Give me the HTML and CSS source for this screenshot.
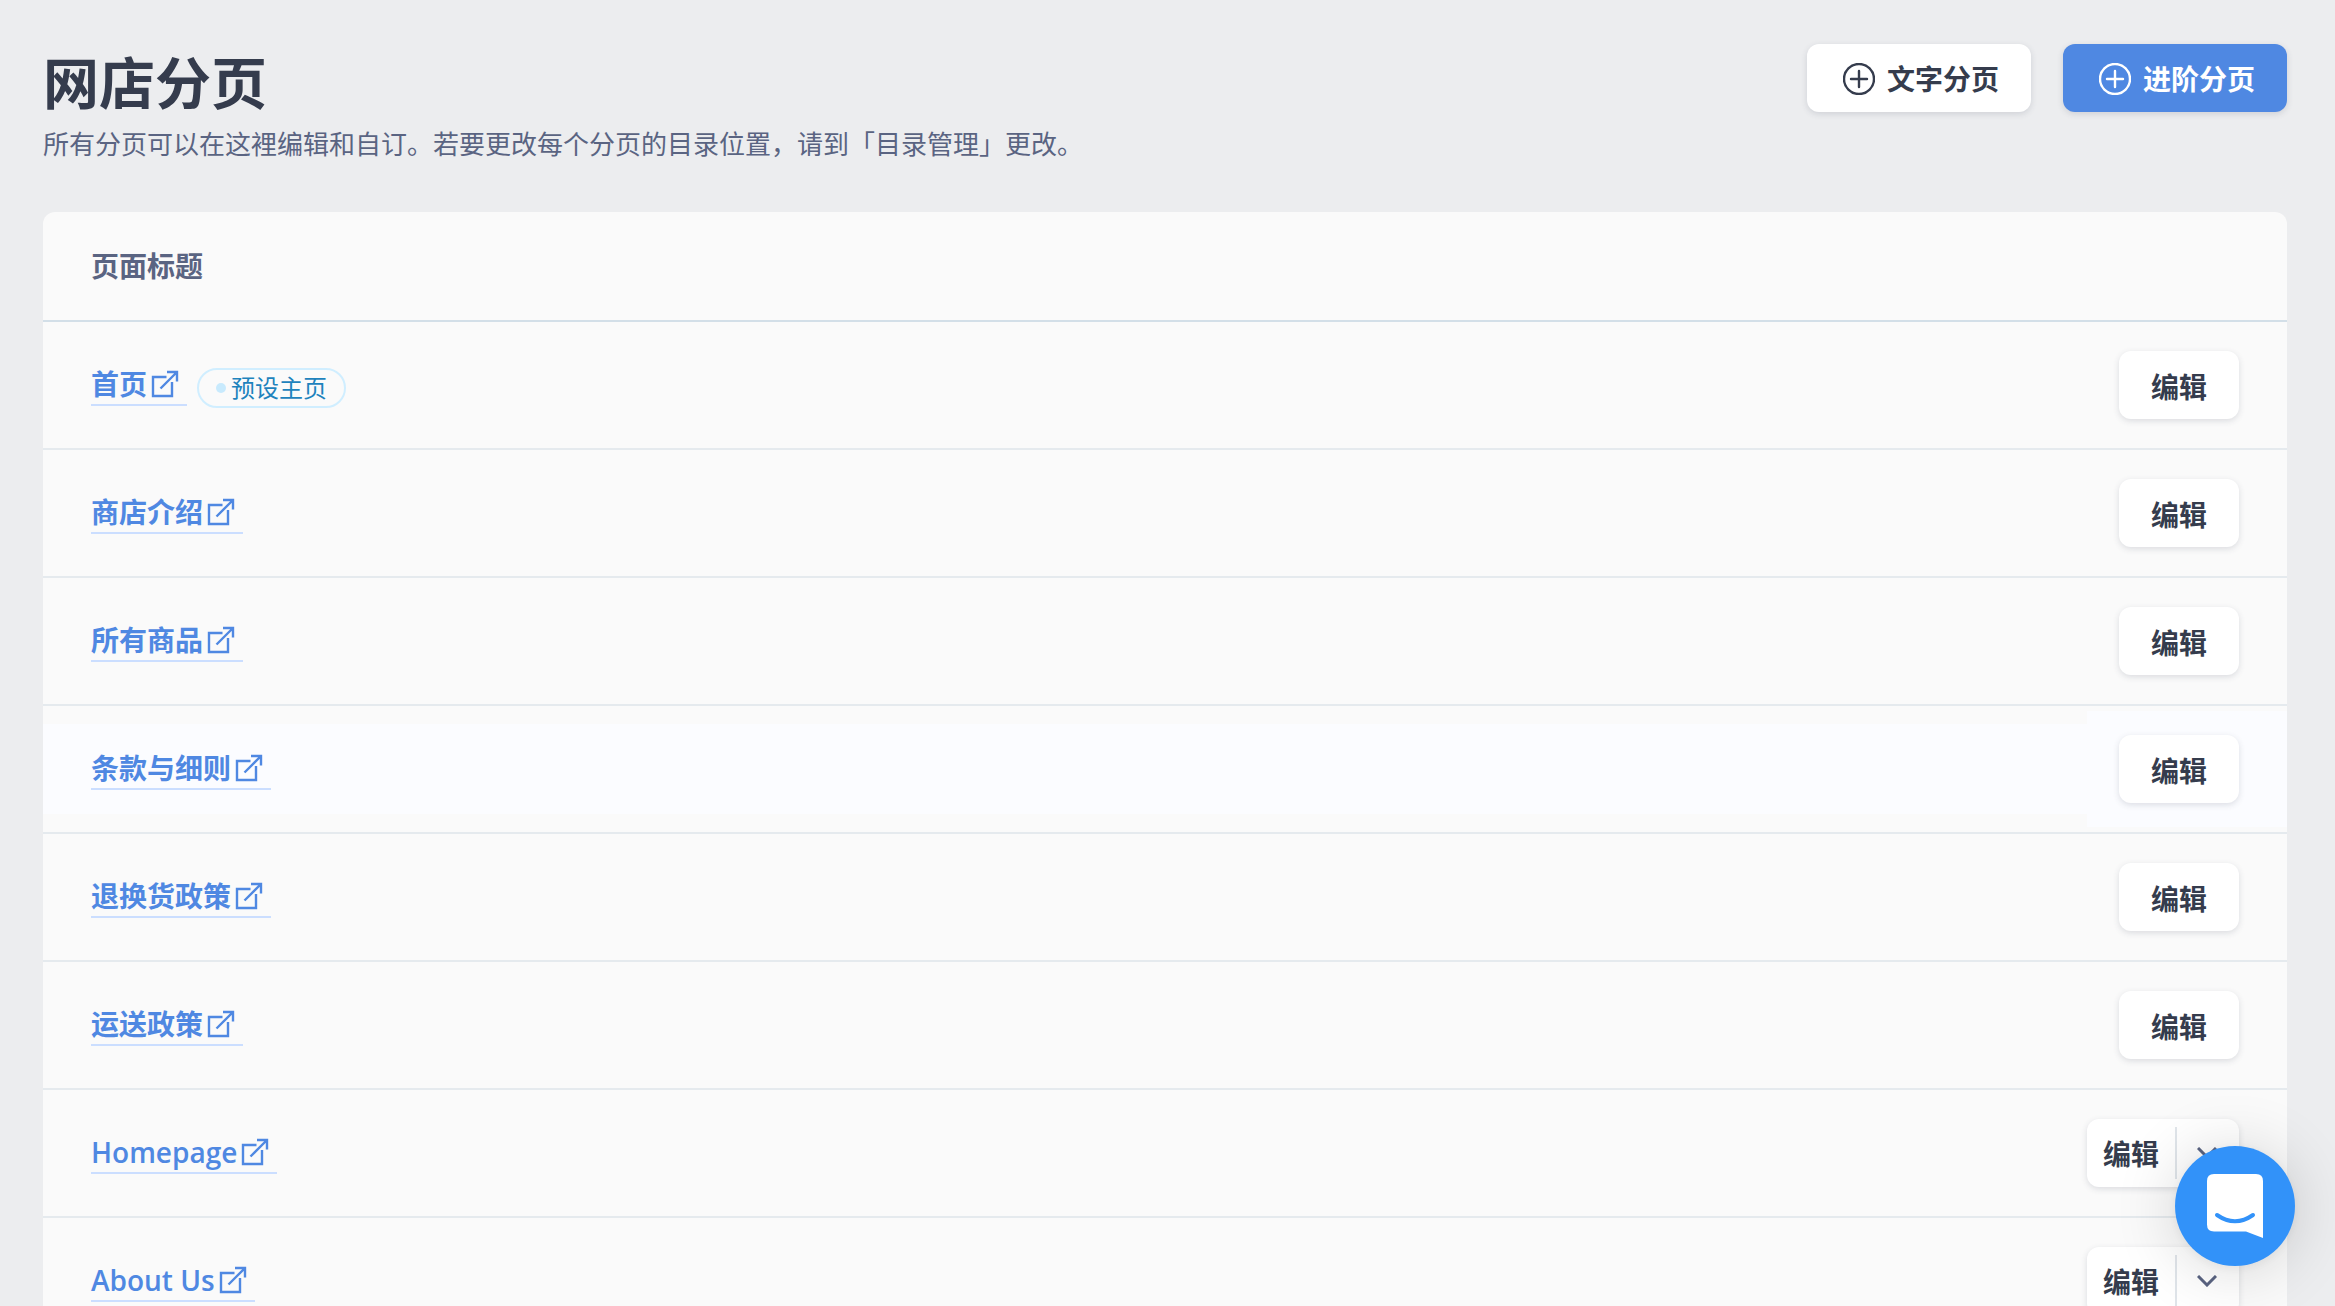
FILE: index.html
```
<!DOCTYPE html>
<html lang="zh-CN">
<head>
    <meta charset="UTF-8">
    <meta name="viewport" content="width=device-width, initial-scale=1.0">
    <title>网店分页</title>
    <link rel="stylesheet" href="styles.css">
</head>
<body>
    <!-- Shared icons -->
    <svg class="icon-defs" aria-hidden="true">
        <symbol id="icon-external" viewBox="0 0 28 28">
            <path d="M15.500 7H2V26H21V12M16 2H26V11.500M26 2L9.500 18.500" fill="none" stroke="currentColor" stroke-width="2.400"/>
        </symbol>
        <symbol id="icon-plus" viewBox="0 0 32 32">
            <circle cx="16" cy="16" r="15" fill="none" stroke="currentColor" stroke-width="2.400"/>
            <path d="M16 8V24M8 16H24" fill="none" stroke="currentColor" stroke-width="2.400" stroke-linecap="round"/>
        </symbol>
        <symbol id="icon-chevron" viewBox="0 0 20 12">
            <path d="M1 1L10 10L19 1" fill="none" stroke="currentColor" stroke-width="3"/>
        </symbol>
    </svg>

    <main class="page">
        <header class="page-header">
            <div class="page-intro">
                <h1>网店分页</h1>
                <p>所有分页可以在这裡编辑和自订。若要更改每个分页的目录位置，请到「目录管理」更改。</p>
            </div>
            <div class="page-actions">
                <button type="button" class="btn btn-add"><svg class="icon-plus" aria-hidden="true"><use href="#icon-plus"/></svg>文字分页</button>
                <button type="button" class="btn btn-add btn-primary"><svg class="icon-plus" aria-hidden="true"><use href="#icon-plus"/></svg>进阶分页</button>
            </div>
        </header>

        <table class="pages-table">
            <thead>
                <tr>
                    <th colspan="2" scope="col">页面标题</th>
                </tr>
            </thead>
            <tbody>
                <tr>
                    <td>
                        <div class="cell-title">
                            <a href="#" class="page-link">首页<svg class="icon-external" aria-hidden="true"><use href="#icon-external"/></svg></a>
                            <span class="badge">预设主页</span>
                        </div>
                    </td>
                    <td class="col-action"><div class="cell-action"><button type="button" class="btn btn-edit">编辑</button></div></td>
                </tr>
                <tr>
                    <td><div class="cell-title"><a href="#" class="page-link">商店介绍<svg class="icon-external" aria-hidden="true"><use href="#icon-external"/></svg></a></div></td>
                    <td class="col-action"><div class="cell-action"><button type="button" class="btn btn-edit">编辑</button></div></td>
                </tr>
                <tr>
                    <td><div class="cell-title"><a href="#" class="page-link">所有商品<svg class="icon-external" aria-hidden="true"><use href="#icon-external"/></svg></a></div></td>
                    <td class="col-action"><div class="cell-action"><button type="button" class="btn btn-edit">编辑</button></div></td>
                </tr>
                <tr class="active">
                    <td><div class="cell-title"><a href="#" class="page-link">条款与细则<svg class="icon-external" aria-hidden="true"><use href="#icon-external"/></svg></a></div></td>
                    <td class="col-action"><div class="cell-action"><button type="button" class="btn btn-edit">编辑</button></div></td>
                </tr>
                <tr>
                    <td><div class="cell-title"><a href="#" class="page-link">退换货政策<svg class="icon-external" aria-hidden="true"><use href="#icon-external"/></svg></a></div></td>
                    <td class="col-action"><div class="cell-action"><button type="button" class="btn btn-edit">编辑</button></div></td>
                </tr>
                <tr>
                    <td><div class="cell-title"><a href="#" class="page-link">运送政策<svg class="icon-external" aria-hidden="true"><use href="#icon-external"/></svg></a></div></td>
                    <td class="col-action"><div class="cell-action"><button type="button" class="btn btn-edit">编辑</button></div></td>
                </tr>
                <tr>
                    <td><div class="cell-title"><a href="#" class="page-link">Homepage<svg class="icon-external" aria-hidden="true"><use href="#icon-external"/></svg></a></div></td>
                    <td class="col-action">
                        <div class="cell-action">
                            <div class="btn-split">
                                <button type="button" class="split-main">编辑</button>
                                <button type="button" class="split-toggle" aria-label="更多"><svg class="icon-chevron" aria-hidden="true"><use href="#icon-chevron"/></svg></button>
                            </div>
                        </div>
                    </td>
                </tr>
                <tr>
                    <td><div class="cell-title"><a href="#" class="page-link">About Us<svg class="icon-external" aria-hidden="true"><use href="#icon-external"/></svg></a></div></td>
                    <td class="col-action">
                        <div class="cell-action">
                            <div class="btn-split">
                                <button type="button" class="split-main">编辑</button>
                                <button type="button" class="split-toggle" aria-label="更多"><svg class="icon-chevron" aria-hidden="true"><use href="#icon-chevron"/></svg></button>
                            </div>
                        </div>
                    </td>
                </tr>
            </tbody>
        </table>
    </main>

    <button type="button" class="chat-launcher" aria-label="客服">
        <svg viewBox="0 0 56 64" aria-hidden="true">
            <path d="M7 0H49Q56 0 56 7V64L39 57.500H7Q0 57.500 0 50.500V7Q0 0 7 0Z" fill="#fff"/>
            <path d="M10 41Q28 53.500 46 41" fill="none" stroke="#3292f9" stroke-width="4" stroke-linecap="round"/>
        </svg>
    </button>
</body>
</html>
```
FILE: styles.css
```
/* Global */
* {
    box-sizing: border-box;
}

body {
    margin: 0;
    height: 100vh;
    overflow: hidden;
    font-family: "Open Sans", "Noto Sans CJK SC", sans-serif;
    font-size: 28px;
    line-height: 40px;
    background-color: #ecedef;
    color: #353c4d;
}

button {
    font: inherit;
    color: inherit;
    border: none;
    white-space: nowrap;
    cursor: pointer;
}

.icon-defs {
    display: none;
}

/* Page */
.page {
    height: 100%;
    padding: 44px 48px 0 43px;
    overflow-y: auto;
    scrollbar-width: none;
}

.page-header {
    display: flex;
    justify-content: space-between;
    align-items: flex-start;
    margin-bottom: 48px;
}

.page-header h1 {
    margin: 0 0 4px;
    font-size: 56px;
    font-weight: 600;
    line-height: 76px;
}

.page-header p {
    margin: 0;
    font-size: 26px;
    line-height: 40px;
    color: #5a6482;
}

.page-actions {
    display: flex;
    gap: 32px;
}

/* Buttons */
.btn,
.btn-split {
    height: 68px;
    border-radius: 12px;
    background-color: #fff;
    font-weight: 600;
    box-shadow: 0 2px 6px rgba(53, 60, 90, 0.16);
}

.btn-add {
    display: flex;
    align-items: center;
    gap: 12px;
    padding: 2px 32px 0 36px;
}

.btn-primary {
    background-color: #4f88e2;
    color: #fff;
}

.btn-edit {
    padding: 4px 32px 0;
}

.btn-split {
    display: flex;
    align-items: center;
}

.split-main {
    padding: 2px 16px 0;
    background: none;
    font-weight: 600;
}

.split-toggle {
    display: flex;
    align-items: center;
    height: 52px;
    padding: 0 22px 0 20px;
    background: none;
    color: #5a6482;
    border-left: 2px solid #e0e5ea;
}

.icon-plus {
    width: 32px;
    height: 32px;
    overflow: visible;
}

.icon-chevron {
    width: 20px;
    height: 12px;
}

.icon-external {
    width: 28px;
    height: 28px;
    margin: 0 8px 0 4px;
}

/* Table */
.pages-table {
    width: 100%;
    border-spacing: 0;
    border-radius: 12px 12px 0 0;
    background-color: #fafafa;
}

.pages-table th {
    padding: 34px 48px;
    text-align: left;
    font-weight: 600;
    color: #5a6482;
    border-bottom: 2px solid #d3dfe8;
}

.pages-table td {
    padding: 18px 0;
    border-bottom: 2px solid #e5eaee;
}

.pages-table .col-action {
    width: 184px;
    padding: 5px 0;
}

.cell-title {
    display: flex;
    align-items: center;
    gap: 10px;
    height: 90px;
    padding-left: 48px;
}

.cell-action {
    display: flex;
    align-items: center;
    justify-content: flex-end;
    height: 116px;
    padding-right: 48px;
}

.active .cell-title,
.active .cell-action {
    background-color: #fbfcff;
}

.page-link {
    display: flex;
    align-items: center;
    color: #4f88e2;
    font-weight: 600;
    text-decoration: none;
    border-bottom: 2px solid #cbdeff;
}

.badge {
    display: flex;
    align-items: center;
    gap: 5px;
    height: 40px;
    margin-top: 6px;
    padding: 0 17px;
    border: 2px solid #d0eeff;
    border-radius: 20px;
    font-size: 24px;
    color: #1e83bd;
}

.badge::before {
    content: "";
    width: 10px;
    height: 10px;
    border-radius: 50%;
    background-color: #c8eafd;
}

/* Chat launcher */
.chat-launcher {
    position: fixed;
    right: 40px;
    bottom: 40px;
    display: flex;
    align-items: center;
    justify-content: center;
    width: 120px;
    height: 120px;
    padding: 0;
    border-radius: 50%;
    background-color: #3292f9;
    box-shadow: 0 2px 12px rgba(0, 0, 0, 0.06), 0 4px 64px rgba(0, 0, 0, 0.16);
}

.chat-launcher svg {
    width: 56px;
    height: 64px;
}
```
